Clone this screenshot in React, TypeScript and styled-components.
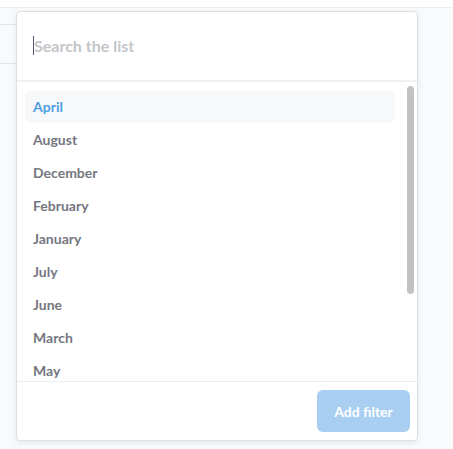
import React from "react";
import styled, { createGlobalStyle } from "styled-components";

const Global = createGlobalStyle`
  html, body { margin: 0; padding: 0; background: #f9fafb; }
  body { font-family: Lato, "Noto Sans", sans-serif; width: 453px; height: 449px; overflow: hidden; }
  * { box-sizing: border-box; }
`;

const TopBar = styled.div`
  height: 8px;
  background: #fff;
  border-bottom: 1px solid #eceef0;
`;

const Stage = styled.div`
  display: flex;
  align-items: flex-start;
`;

const Stub = styled.div`
  width: 16px;
  height: 40px;
  margin-top: 16px;
  border-top: 1px solid #e2e4e7;
  border-bottom: 1px solid #e2e4e7;
  background: #f9fafb;
`;

const Popover = styled.div`
  width: 402px;
  height: 430px;
  margin-top: 3px;
  background: #fff;
  border: 1px solid #dcdfe3;
  border-radius: 4px;
  box-shadow: 0 2px 6px rgba(0, 0, 0, 0.08);
  display: flex;
  flex-direction: column;
  overflow: hidden;
`;

const SearchBar = styled.div`
  height: 70px;
  flex: none;
  display: flex;
  align-items: center;
  padding: 0 16px;
  border-bottom: 2px solid #f0f0f1;
`;

const Caret = styled.span`
  width: 1px;
  height: 19px;
  margin-top: -1px;
  background: #4c5773;
  flex: none;
`;

const SearchInput = styled.input`
  flex: 1;
  min-width: 0;
  border: none;
  padding: 0 0 2px 0;
  background: transparent;
  font-family: Lato, sans-serif;
  font-weight: 700;
  font-size: 16px;
  color: #4c5773;
  caret-color: transparent;
  outline: none;
  &::placeholder { color: #c3c5c9; }
`;

const ListArea = styled.div`
  flex: 1;
  display: flex;
  min-height: 0;
`;

const List = styled.div`
  flex: 1;
  overflow: hidden;
  padding: 8px 11px 8px 8px;
`;

const Track = styled.div`
  width: 11px;
  flex: none;
  padding: 4px 3px 0 1px;
`;

const Thumb = styled.div`
  width: 7px;
  border-radius: 4px;
  background: #c2c2c2;
`;

const Item = styled.div<{ $active?: boolean }>`
  height: 33px;
  display: flex;
  align-items: center;
  padding-left: 8px;
  border-radius: 6px;
  font-size: 14px;
  font-weight: 700;
  color: ${(p) => (p.$active ? "#509ee3" : "#74777f")};
  background: ${(p) => (p.$active ? "#f6f8fa" : "transparent")};
`;

const Footer = styled.div`
  flex: none;
  height: 59px;
  border-top: 1px solid #eceef0;
  display: flex;
  justify-content: flex-end;
  align-items: flex-start;
  padding: 8px 7px 0 0;
`;

const Button = styled.button`
  width: 93px;
  height: 42px;
  border: none;
  border-radius: 6px;
  background: #a8cef2;
  color: #fff;
  font-family: Lato, sans-serif;
  font-weight: 700;
  font-size: 14px;
`;

const months = [
  "April", "August", "December", "February", "January", "July",
  "June", "March", "May", "November", "October", "September",
];

export default function App() {
  return (
    <>
      <Global />
      <TopBar />
      <Stage>
        <Stub />
        <Popover>
          <SearchBar>
            <Caret />
            <SearchInput placeholder="Search the list" />
          </SearchBar>
          <ListArea>
            <List>
              {months.map((m, i) => (
                <Item key={m} $active={i === 0}>{m}</Item>
              ))}
            </List>
            <Track>
              <Thumb style={{ height: 208 }} />
            </Track>
          </ListArea>
          <Footer>
            <Button>Add filter</Button>
          </Footer>
        </Popover>
      </Stage>
    </>
  );
}
